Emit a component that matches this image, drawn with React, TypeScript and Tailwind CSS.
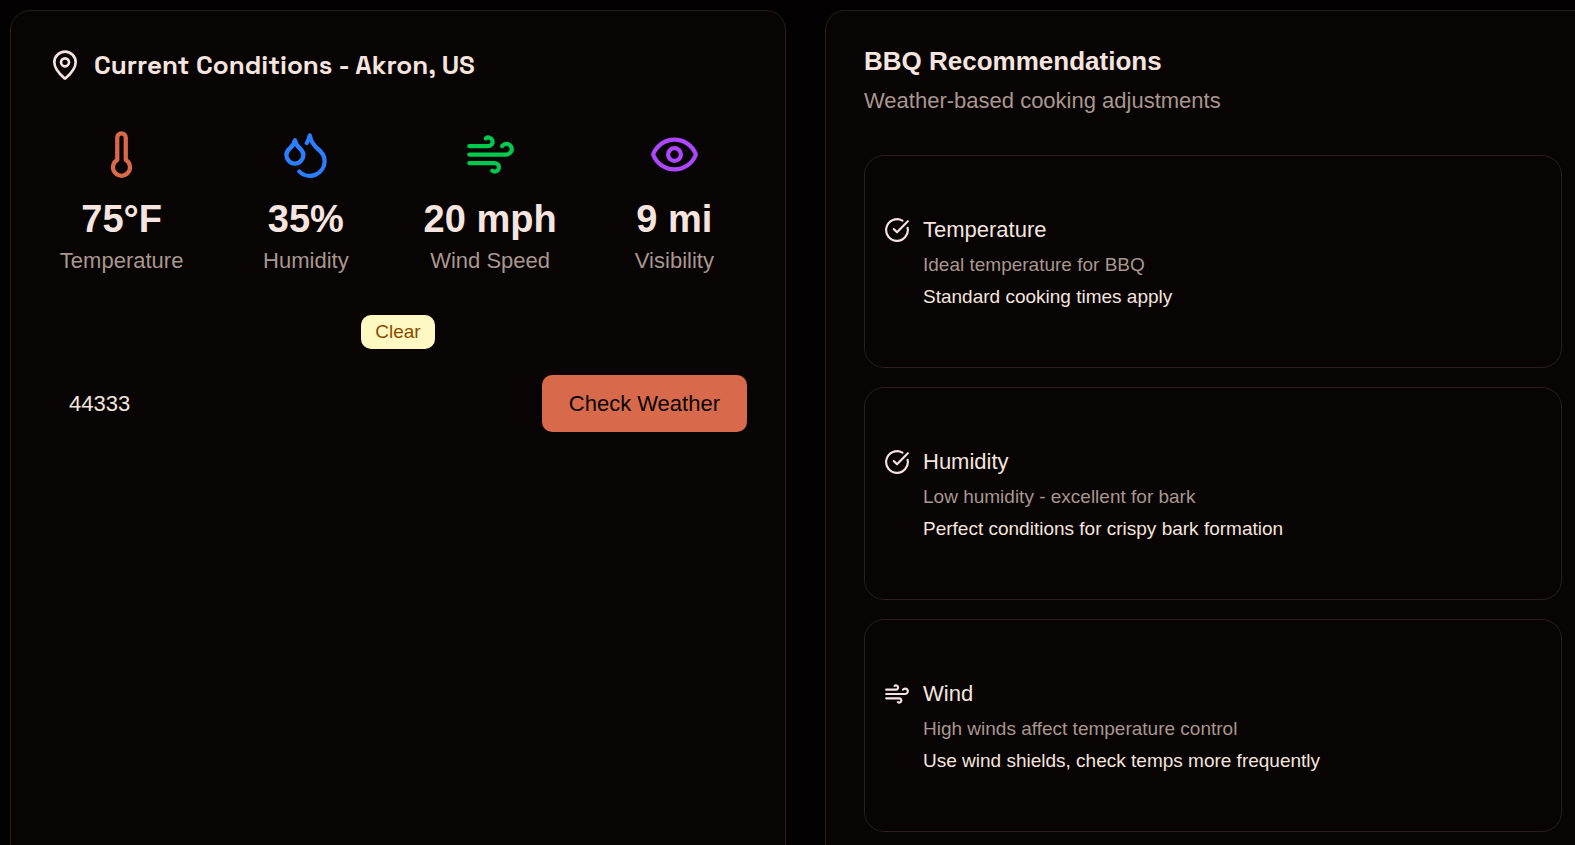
import { useState } from "react";
import {
  CircleCheckBig,
  Droplets,
  Eye,
  MapPin,
  Thermometer,
  Wind,
  type LucideIcon,
} from "lucide-react";

interface Stat {
  label: string;
  value: string;
  icon: LucideIcon;
  color: string;
}

interface Recommendation {
  title: string;
  description: string;
  action: string;
  icon: LucideIcon;
}

const STATS: Stat[] = [
  { label: "Temperature", value: "75°F", icon: Thermometer, color: "text-[#d9694b]" },
  { label: "Humidity", value: "35%", icon: Droplets, color: "text-[#2b7fff]" },
  { label: "Wind Speed", value: "20 mph", icon: Wind, color: "text-[#00c950]" },
  { label: "Visibility", value: "9 mi", icon: Eye, color: "text-[#ad46ff]" },
];

const RECOMMENDATIONS: Recommendation[] = [
  {
    title: "Temperature",
    description: "Ideal temperature for BBQ",
    action: "Standard cooking times apply",
    icon: CircleCheckBig,
  },
  {
    title: "Humidity",
    description: "Low humidity - excellent for bark",
    action: "Perfect conditions for crispy bark formation",
    icon: CircleCheckBig,
  },
  {
    title: "Wind",
    description: "High winds affect temperature control",
    action: "Use wind shields, check temps more frequently",
    icon: Wind,
  },
];

function StatTile({ stat }: { stat: Stat }) {
  const Icon = stat.icon;
  return (
    <div className="flex flex-col items-center whitespace-nowrap">
      <Icon className={`mb-3.5 size-[51px] ${stat.color}`} />
      <div className="text-[38px] leading-[51px] font-bold">{stat.value}</div>
      <div className="text-[22px] leading-8 text-[#a8968f]">{stat.label}</div>
    </div>
  );
}

function RecommendationCard({ item }: { item: Recommendation }) {
  const Icon = item.icon;
  return (
    <div className="flex gap-[13px] rounded-[20px] border border-[#2a1d1d] px-[19px] pt-[58px] pb-[57px]">
      <Icon className="mt-[3px] size-[26px] shrink-0" />
      <div className="min-w-0">
        <h3 className="text-[22px] leading-8">{item.title}</h3>
        <p className="mt-1.5 text-[19px] leading-[26px] text-[#a8968f]">{item.description}</p>
        <p className="mt-1.5 text-[19px] leading-[26px]">{item.action}</p>
      </div>
    </div>
  );
}

export default function App() {
  const [zip, setZip] = useState("44333");

  return (
    <div className="min-h-screen overflow-hidden bg-[#020000] font-['Liberation_Sans',Arial,sans-serif] text-[#f5e4df]">
      {/* The second column runs past the right edge of the window */}
      <main className="-mr-[26px] ml-2.5 grid grid-cols-2 gap-[39px] pt-2.5">
        {/* Current conditions */}
        <section className="rounded-[20px] border border-[#2a1d1d] bg-[#080403] p-[38px]">
          <h2 className="flex items-center gap-[13px] font-['Space_Grotesk',Inter,sans-serif] text-[26px] leading-8 font-semibold">
            <MapPin className="size-8" />
            Current Conditions - Akron, US
          </h2>

          <div className="mt-12 grid grid-cols-4 gap-[39px]">
            {STATS.map((stat) => (
              <StatTile key={stat.label} stat={stat} />
            ))}
          </div>

          <div className="mt-[38px] flex justify-center">
            <span className="rounded-[10px] bg-[#fef9c2] px-3.5 py-1 text-[19px] leading-[26px] text-[#894b00]">
              Clear
            </span>
          </div>

          <form className="mt-[26px] flex gap-[13px]" onSubmit={(e) => e.preventDefault()}>
            <input
              type="text"
              aria-label="Zip code"
              value={zip}
              onChange={(e) => setZip(e.target.value)}
              className="min-w-0 flex-1 bg-transparent px-5 text-[22px] outline-none"
            />
            <button
              type="submit"
              className="rounded-[10px] bg-[#d9694b] px-[27px] text-[22px] leading-[57px] text-[#080403]"
            >
              Check Weather
            </button>
          </form>
        </section>

        {/* Cooking adjustments */}
        <section className="rounded-[20px] border border-[#2a1d1d] bg-[#080403] p-[38px]">
          <h2 className="text-[26px] leading-6 font-bold">BBQ Recommendations</h2>
          <p className="mt-3 text-[22px] leading-8 text-[#a8968f]">
            Weather-based cooking adjustments
          </p>

          <div className="mt-[38px] flex flex-col gap-[19px]">
            {RECOMMENDATIONS.map((item) => (
              <RecommendationCard key={item.title} item={item} />
            ))}
          </div>
        </section>
      </main>
    </div>
  );
}
